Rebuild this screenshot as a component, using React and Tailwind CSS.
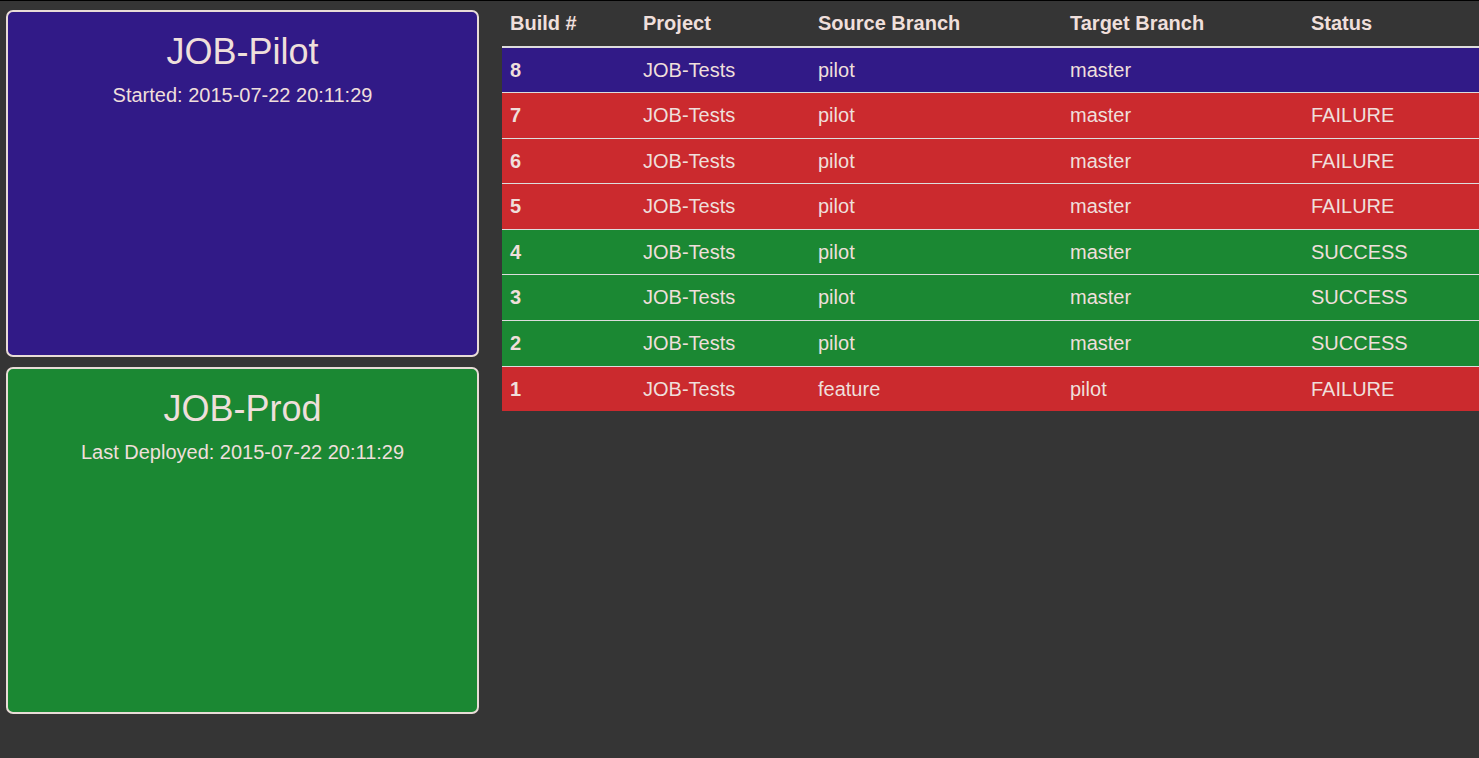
import React from 'react';

// Build board: environment cards on the left, build history on the right.
const ENVS = [
  { name: 'JOB-Pilot', label: 'Started: 2015-07-22 20:11:29', bg: 'bg-[#311a87]' },
  { name: 'JOB-Prod', label: 'Last Deployed: 2015-07-22 20:11:29', bg: 'bg-[#1b8833]' },
];

const BUILDS = [
  { id: 8, project: 'JOB-Tests', source: 'pilot', target: 'master', status: '' },
  { id: 7, project: 'JOB-Tests', source: 'pilot', target: 'master', status: 'FAILURE' },
  { id: 6, project: 'JOB-Tests', source: 'pilot', target: 'master', status: 'FAILURE' },
  { id: 5, project: 'JOB-Tests', source: 'pilot', target: 'master', status: 'FAILURE' },
  { id: 4, project: 'JOB-Tests', source: 'pilot', target: 'master', status: 'SUCCESS' },
  { id: 3, project: 'JOB-Tests', source: 'pilot', target: 'master', status: 'SUCCESS' },
  { id: 2, project: 'JOB-Tests', source: 'pilot', target: 'master', status: 'SUCCESS' },
  { id: 1, project: 'JOB-Tests', source: 'feature', target: 'pilot', status: 'FAILURE' },
];

function rowColor(status) {
  if (status === 'FAILURE') return 'bg-[#cb2a2e]';
  if (status === 'SUCCESS') return 'bg-[#1b8833]';
  return 'bg-[#311a87]';
}

function EnvCard({ env }) {
  return (
    <div className={`h-[347px] rounded-[7px] border-2 border-[#e8dcd7] ${env.bg} text-center`}>
      <h1 className="mt-[20px] mb-[9px] text-[36px] leading-[1.1]">{env.name}</h1>
      <p className="text-[20px] leading-[1.42857]">{env.label}</p>
    </div>
  );
}

export default function App() {
  return (
    <div
      className="min-h-[758px] bg-[#353535] text-[#efdfdb] border-t border-black"
      style={{ fontFamily: '"Liberation Sans", Arial, sans-serif' }}
    >
      <div className="flex items-start">
        <div className="w-[473px] ml-[6px] mt-[9px] flex flex-col gap-[10px] shrink-0">
          {ENVS.map(env => <EnvCard key={env.name} env={env} />)}
        </div>

        <table className="ml-[23px] flex-1 table-fixed border-collapse text-[20px] leading-[1.42857]">
          <thead>
            <tr className="text-left">
              <th className="w-[133px] p-2 font-bold border-b-2 border-[#dddddd]">Build #</th>
              <th className="w-[175px] p-2 font-bold border-b-2 border-[#dddddd]">Project</th>
              <th className="w-[252px] p-2 font-bold border-b-2 border-[#dddddd]">Source Branch</th>
              <th className="w-[241px] p-2 font-bold border-b-2 border-[#dddddd]">Target Branch</th>
              <th className="p-2 font-bold border-b-2 border-[#dddddd]">Status</th>
            </tr>
          </thead>
          <tbody>
            {BUILDS.map(b => (
              <tr key={b.id} className={rowColor(b.status)}>
                <td className="p-2 font-bold border-t border-[#dddddd]">{b.id}</td>
                <td className="p-2 border-t border-[#dddddd]">{b.project}</td>
                <td className="p-2 border-t border-[#dddddd]">{b.source}</td>
                <td className="p-2 border-t border-[#dddddd]">{b.target}</td>
                <td className="p-2 border-t border-[#dddddd]">{b.status}</td>
              </tr>
            ))}
          </tbody>
        </table>
      </div>
    </div>
  );
}
